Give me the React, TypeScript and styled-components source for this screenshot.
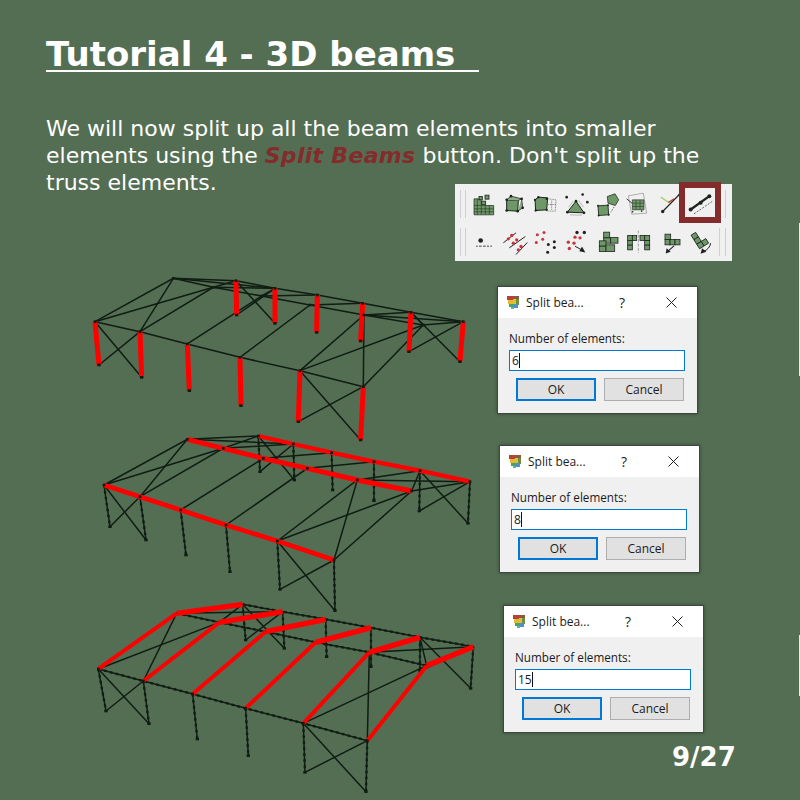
import React from 'react';
import styled, { createGlobalStyle } from 'styled-components';

type Point = [number, number];
type Mode = 'columns' | 'eaves' | 'rafters';

const GlobalStyle = createGlobalStyle`
  html, body {
    margin: 0;
    padding: 0;
    background: #546e53;
  }
`;

const Slide = styled.div`
  width: 800px;
  height: 800px;
  overflow: hidden;
  background: #546e53;
  color: #fff;
  font-family: 'DejaVu Sans', sans-serif;
  display: flex;
  flex-direction: column;
`;

const Title = styled.h1`
  margin: 34px 0 0 46px;
  font-size: 34px;
  line-height: 40px;
  font-weight: 700;
  white-space: pre;
  text-decoration: underline;
  text-decoration-thickness: 2px;
  text-underline-offset: 4px;
`;

const Intro = styled.p`
  margin: 41px 0 0 46px;
  width: 690px;
  font-size: 22px;
  line-height: 27px;
`;

const Accent = styled.em`
  color: #842b2b;
  font-weight: 700;
  letter-spacing: 0.3px;
`;

const Toolbar = styled.div`
  margin: -12px 0 0 455px;
  width: 277px;
  height: 77px;
  background: #f0f0f0;
  display: flex;
  flex-direction: column;
  filter: blur(0.3px);
`;

const ToolRow = styled.div`
  height: 38px;
  padding: 1px 0 0 5px;
  display: flex;
  align-items: center;
`;

const Separator = styled.span<{ $gap?: number }>`
  width: 1px;
  height: 28px;
  margin-left: ${p => p.$gap ?? 0}px;
  background: #cfcfcf;
  flex: none;
`;

const ToolIcon = styled.span<{ $selected?: boolean; $first?: boolean }>`
  position: relative;
  width: 31px;
  height: 34px;
  display: block;
  flex: none;
  margin-left: ${p => (p.$first ? 3 : 0)}px;

  ${p =>
    p.$selected &&
    `
    &::after {
      content: '';
      position: absolute;
      left: -7px;
      top: -5px;
      width: 30px;
      height: 29px;
      border: 6px solid #842b2b;
    }
  `}
`;

const IconArt = styled.svg`
  display: block;
  width: 31px;
  height: 34px;
  overflow: visible;
`;

const Stage = styled.div`
  flex: 1;
  display: flex;
`;

const Drawing = styled.svg`
  display: block;
  width: 490px;
  height: 539px;
  flex: none;
`;

const DialogColumn = styled.div`
  flex: 1;
  display: flex;
  flex-direction: column;
  padding-top: 25px;
`;

const Dialog = styled.div<{ $left: number; $top: number }>`
  width: 201px;
  height: 128px;
  box-sizing: border-box;
  margin: ${p => p.$top}px 0 0 ${p => p.$left}px;
  background: #f0f0f0;
  border: 1px solid #3f463f;
  box-shadow: 0 0 3px rgba(30, 40, 30, 0.55);
  color: #1b1b1b;
  font-family: 'Open Sans', sans-serif;
  font-size: 12px;
`;

const TitleBar = styled.div`
  height: 31px;
  background: #fff;
  display: flex;
  align-items: center;
  padding-left: 8px;
`;

const TitleText = styled.span`
  margin-left: 5px;
  width: 80px;
  white-space: nowrap;
`;

const Help = styled.span`
  width: 20px;
  margin-left: 6px;
  text-align: center;
  font-size: 14px;
`;

const CloseIcon = styled.svg`
  width: 11px;
  height: 11px;
  margin-left: 34px;
`;

const Body = styled.div`
  padding: 11px 11px 0;
`;

const FieldLabel = styled.div`
  height: 18px;
  line-height: 18px;
  font-size: 11.7px;
`;

const Field = styled.div`
  margin-top: 3px;
  width: 176px;
  height: 21px;
  box-sizing: border-box;
  background: #fff;
  border: 1px solid #0078d7;
  padding-left: 2px;
  line-height: 19px;
  display: flex;
  align-items: center;
`;

const Caret = styled.span`
  width: 1px;
  height: 15px;
  background: #111;
`;

const Buttons = styled.div`
  margin: 7px 0 0 7px;
  display: flex;
  gap: 8px;
`;

const Button = styled.div<{ $primary?: boolean }>`
  width: 80px;
  height: 23px;
  box-sizing: border-box;
  background: #e1e1e1;
  border: ${p => (p.$primary ? '2px solid #0078d7' : '1px solid #adadad')};
  display: flex;
  align-items: center;
  justify-content: center;
`;

const PageNumber = styled.div`
  margin: 9px 0 0 182px;
  font-size: 26px;
  line-height: 30px;
  font-weight: 700;
`;

const EdgeMark = styled.span<{ $top: number; $height: number }>`
  position: absolute;
  left: 799px;
  top: ${p => p.$top}px;
  width: 1px;
  height: ${p => p.$height}px;
  background: #e8ece8;
`;

const DARK = '#0f1d13';
const RED = '#ff0000';

interface FrameData {
  x: number;
  y: number;
  mode: Mode;
  front: Point[];
  ridge: Point[];
  back: Point[];
  frontBase: Point[];
  backBase: Point[];
  extra?: Point[][];
}

const frames: FrameData[] = [
  {
    x: 80,
    y: 270,
    mode: 'columns',
    front: [[45, 155], [180, 185], [322, 222], [480, 262], [660, 302], [850, 350]],
    ridge: [[280, 25], [400, 52], [545, 78], [690, 105], [852, 135], [1030, 165]],
    back: [[468, 32], [585, 55], [712, 75], [848, 100], [993, 127], [1150, 155]],
    frontBase: [[57, 285], [185, 322], [328, 362], [483, 407], [655, 455], [842, 510]],
    backBase: [[470, 135], [585, 160], [710, 187], [842, 213], [987, 245], [1140, 275]],
    extra: [[[545, 78], [585, 55]]],
  },
  {
    x: 90,
    y: 430,
    mode: 'eaves',
    front: [[42, 165], [150, 200], [272, 240], [408, 285], [562, 333], [732, 390]],
    ridge: [[292, 28], [400, 55], [520, 85], [652, 115], [802, 150], [965, 183]],
    back: [[505, 18], [610, 42], [725, 68], [852, 95], [990, 122], [1140, 155]],
    frontBase: [[60, 290], [168, 330], [288, 375], [420, 425], [570, 478], [735, 542]],
    backBase: [[510, 125], [613, 150], [728, 180], [852, 212], [988, 243], [1134, 280]],
  },
  {
    x: 90,
    y: 595,
    mode: 'rafters',
    front: [[25, 222], [160, 258], [308, 297], [467, 340], [640, 385], [832, 437]],
    ridge: [[260, 55], [388, 82], [527, 110], [677, 142], [838, 172], [1010, 212]],
    back: [[458, 28], [578, 50], [707, 73], [843, 98], [990, 127], [1150, 155]],
    frontBase: [[48, 348], [177, 386], [322, 432], [475, 482], [645, 532], [828, 590]],
    backBase: [[467, 135], [583, 160], [710, 185], [843, 215], [990, 228], [1142, 280]],
  },
];

const toPath = (pts: Point[]) => 'M' + pts.map(p => p.join(' ')).join('L');

const Member = ({ pts, beads, red }: { pts: Point[]; beads?: boolean; red?: number }) => (
  <>
    <path d={toPath(pts)} fill="none" stroke={red ? RED : DARK} strokeWidth={red ?? 4.5} />
    {beads && !red && <path d={toPath(pts)} fill="none" stroke={DARK} strokeWidth={7} strokeDasharray="8 10" />}
  </>
);

const Frame = ({ data }: { data: FrameData }) => {
  const { front, ridge, back, frontBase, backBase, mode } = data;
  const columnsSplit = mode !== 'columns';
  const eavesSplit = mode === 'rafters';
  const columns = [...front.map((p, i) => [p, frontBase[i]]), ...back.map((p, i) => [p, backBase[i]])] as Point[][];

  return (
    <g transform={`translate(${data.x} ${data.y}) scale(0.3333)`}>
      {/* bracing between the end columns and in the roof */}
      {(
        [
          [front[0], frontBase[1]],
          [front[1], frontBase[0]],
          [front[4], frontBase[5]],
          [front[5], frontBase[4]],
          [back[0], backBase[1]],
          [back[1], backBase[0]],
          [back[4], backBase[5]],
          [back[5], backBase[4]],
          [ridge[0], front[1]],
          [front[0], ridge[1]],
          [ridge[4], front[5]],
          [front[4], ridge[5]],
          [ridge[0], back[1]],
          [ridge[1], back[0]],
          [ridge[4], back[5]],
          [ridge[5], back[4]],
          ...(data.extra ?? []),
        ] as Point[][]
      ).map((pts, i) => (
        <Member key={i} pts={pts} />
      ))}
      {mode !== 'rafters' &&
        front.map((p, i) => <Member key={i} pts={[p, ridge[i], back[i]]} />)}
      {mode !== 'eaves' && (
        <>
          <Member pts={front} beads={eavesSplit} />
          <Member pts={ridge} beads={eavesSplit} />
          <Member pts={back} beads={eavesSplit} />
        </>
      )}
      {columns.map((pts, i) => (
        <React.Fragment key={i}>
          <Member pts={pts} beads={columnsSplit} red={mode === 'columns' ? 15 : undefined} />
          <rect x={pts[1][0] - 5} y={pts[1][1] - 4} width={10} height={8} fill={DARK} />
        </React.Fragment>
      ))}
      {mode === 'eaves' && (
        <>
          <Member pts={front} red={14} />
          <Member pts={ridge} red={15} />
          <Member pts={back} red={13} />
        </>
      )}
      {mode === 'rafters' &&
        front.map((p, i) => (
          <React.Fragment key={i}>
            <Member pts={[p, ridge[i]]} red={12} />
            <Member pts={[ridge[i], back[i]]} red={16} />
          </React.Fragment>
        ))}
      {[...front, ...(mode === 'rafters' ? [] : ridge), ...(mode === 'rafters' ? [] : back)].map((p, i) => (
        <rect key={i} x={p[0] - 4} y={p[1] - 4} width={8} height={8} fill={DARK} />
      ))}
    </g>
  );
};

// toolbar drawings use the coordinates of a 3x crop of the toolbar
const GREEN = '#6f9868';
const INK = '#1c241d';
const PIN = '#c7353a';

const Cells = ({ cells }: { cells: number[][] }) => (
  <>
    {cells.map(([x, y, w, h], i) => (
      <rect key={i} x={x} y={y} width={w} height={h} fill={GREEN} stroke={INK} strokeWidth={2.4} />
    ))}
  </>
);

const Dots = ({ pts, r = 4, c = INK }: { pts: number[][]; r?: number; c?: string }) => (
  <>
    {pts.map(([x, y], i) => (
      <circle key={i} cx={x} cy={y} r={r} fill={c} />
    ))}
  </>
);

const topIcons: React.ReactNode[] = [
  <>
    <path d="M72 55h22v20h37v28H72z" fill={GREEN} stroke={INK} strokeWidth={2} />
    <path d="M72 75h22M72 85h59M72 94h59M82 55v48M94 75v28M106 75v28M118 75v28" stroke={INK} strokeWidth={1.6} />
    <Cells cells={[[87, 48, 10, 10], [105, 44, 12, 12], [95, 62, 12, 10]]} />
  </>,
  <>
    <path d="M170 58L205 60L203 92L170 90z" fill={GREEN} stroke={INK} strokeWidth={3} />
    <path d="M170 58L183 47L215 55L205 60M215 55L218 82L203 92" fill="#8fae88" stroke={INK} strokeWidth={2.4} />
    <Dots pts={[[170, 58], [183, 47], [215, 55], [218, 82], [203, 92], [170, 90]]} />
  </>,
  <>
    <path d="M255 58L265 50L293 52L290 88L257 90z" fill={GREEN} stroke={INK} strokeWidth={3} />
    <path d="M295 55L318 58L316 92L292 92M305 60V90M295 72H318" fill="none" stroke={INK} strokeWidth={1.5} strokeDasharray="3 2" />
    <Dots pts={[[255, 58], [265, 50], [290, 55], [257, 90], [290, 88]]} r={3.5} />
  </>,
  <>
    <path d="M378 62L402 97L352 95z" fill={GREEN} stroke={INK} strokeWidth={3} />
    <path d="M356 80L370 62M386 60L400 80M360 103L396 104" stroke="#9a9a9a" strokeWidth={2} />
    <Dots pts={[[378, 62], [352, 95], [402, 97], [350, 50], [398, 42], [412, 65]]} />
  </>,
  <>
    <path d="M472 48L495 40L506 58L496 75L474 68z" fill={GREEN} stroke={INK} strokeWidth={2.2} />
    <path d="M444 76L474 74L476 103L446 105z" fill={GREEN} stroke={INK} strokeWidth={2.6} />
    <path d="M492 80L482 96" stroke={INK} strokeWidth={2.4} strokeDasharray="3 3" />
    <Dots pts={[[444, 76], [474, 74], [446, 105], [476, 103]]} r={3} />
  </>,
  <>
    <path d="M535 46L580 38L590 98L545 101z" fill="none" stroke="#8b8b8b" strokeWidth={2} />
    <path d="M547 58H582V88H547z" fill={GREEN} stroke={INK} strokeWidth={1.8} />
    <path d="M547 68H582M547 78H582M558 58V88M570 58V88" stroke={INK} strokeWidth={1.4} />
    <path d="M530 55L546 68" stroke={INK} strokeWidth={2.6} />
    <Dots pts={[[548, 94], [575, 92]]} r={2.4} />
  </>,
  <>
    <path d="M638 93L688 42" stroke={INK} strokeWidth={3.4} />
    <path d="M632 50L660 68" stroke="#a5d36e" strokeWidth={4} />
    <path d="M655 66L672 55" stroke={PIN} strokeWidth={4} />
    <Dots pts={[[638, 93]]} r={5} />
    <Dots pts={[[688, 42]]} r={3} />
  </>,
  <>
    <path d="M722 87L778 47" stroke={INK} strokeWidth={7} />
    <Dots pts={[[722, 87], [752, 67], [778, 47]]} r={6} />
    <path d="M732 100L788 62" stroke={INK} strokeWidth={2} strokeDasharray="6 4" />
  </>,
];

const bottomIcons: React.ReactNode[] = [
  <>
    <Dots pts={[[92, 180]]} r={7} />
    <path d="M78 197h5m4 0h8m4 0h8m4 0h6m4 0h5" stroke="#444" strokeWidth={3} />
  </>,
  <>
    <path d="M160 187L198 157M178 202L226 168M198 222L232 186" stroke={INK} strokeWidth={3} />
    <Dots pts={[[175, 175], [185, 165], [190, 188], [200, 178], [205, 208], [213, 198]]} r={5} c={PIN} />
  </>,
  <>
    <Dots pts={[[262, 163], [282, 156], [278, 176], [259, 186]]} r={4.5} c={PIN} />
    <Dots pts={[[313, 184], [295, 192], [313, 201], [293, 215]]} r={4.5} />
  </>,
  <>
    <Dots pts={[[355, 185], [375, 170], [390, 172], [372, 188], [358, 204]]} r={5} c={PIN} />
    <Dots pts={[[381, 156], [403, 156]]} r={5} />
    <path d="M375 197L398 210" stroke={INK} strokeWidth={3} />
    <path d="M406 216L388 212L396 198z" fill={INK} />
  </>,
  <Cells
    cells={[[461, 155, 18, 17], [461, 172, 21, 16], [482, 171, 22, 17], [448, 181, 20, 16], [448, 197, 20, 16], [468, 193, 26, 20]]}
  />,
  <>
    <Cells
      cells={[[533, 165, 14, 15], [547, 165, 13, 15], [533, 180, 14, 14], [533, 194, 14, 14], [570, 165, 14, 15], [584, 165, 15, 15], [584, 180, 15, 14], [584, 194, 15, 14]]}
    />
    <path d="M565 150V217" stroke="#8b8b8b" strokeWidth={2.4} strokeDasharray="9 4" />
  </>,
  <>
    <Cells cells={[[645, 161, 17, 16], [645, 177, 15, 16], [660, 177, 15, 16], [675, 177, 15, 16]]} />
    <path d="M672 196L654 212" stroke={INK} strokeWidth={3.4} />
    <path d="M647 219L650 203L662 214z" fill={INK} />
  </>,
  <>
    <g transform="rotate(-32 745 180)">
      <Cells cells={[[735, 155, 16, 16], [735, 171, 16, 16], [735, 187, 16, 16], [751, 187, 16, 16]]} />
    </g>
    <path d="M782 188C780 200 772 208 762 212" fill="none" stroke={INK} strokeWidth={3} />
    <path d="M752 220L756 203L769 214z" fill={INK} />
  </>,
];

const Icon = ({ children, index, row, selected }: { children: React.ReactNode; index: number; row: number; selected?: boolean }) => (
  <ToolIcon $selected={selected} $first={index === 0}>
    <IconArt viewBox={`${57 + 93 * index} ${row === 0 ? 19.5 : 133.5} 93 102`}>{children}</IconArt>
  </ToolIcon>
);

const AppGlyph = () => (
  <svg width="15" height="15" viewBox="0 0 15 15">
    <rect x="1" y="1" width="6" height="4" fill="#b5413b" />
    <rect x="7" y="1" width="6" height="3" fill="#8a5a3a" />
    <rect x="10" y="4" width="3" height="6" fill="#6f8f3c" />
    <rect x="2" y="5" width="5" height="4" fill="#e5b92d" />
    <rect x="7" y="4" width="3" height="5" fill="#d8c23a" />
    <rect x="3" y="9" width="5" height="3" fill="#4ba45c" />
    <rect x="8" y="9" width="4" height="4" fill="#4f8fcf" />
    <rect x="5" y="12" width="3" height="2" fill="#5fa9c9" />
  </svg>
);

const SplitDialog = ({ value, left, top }: { value: string; left: number; top: number }) => (
  <Dialog $left={left} $top={top}>
    <TitleBar>
      <AppGlyph />
      <TitleText>Split bea...</TitleText>
      <Help>?</Help>
      <CloseIcon viewBox="0 0 11 11">
        <path d="M.5.5l10 10M10.5.5l-10 10" stroke="#222" strokeWidth="1" fill="none" />
      </CloseIcon>
    </TitleBar>
    <Body>
      <FieldLabel>Number of elements:</FieldLabel>
      <Field>
        {value}
        <Caret />
      </Field>
      <Buttons>
        <Button $primary>OK</Button>
        <Button>Cancel</Button>
      </Buttons>
    </Body>
  </Dialog>
);

export default function App() {
  return (
    <Slide>
      <GlobalStyle />
      <Title>{'Tutorial 4 - 3D beams  '}</Title>
      <Intro>
        We will now split up all the beam elements into smaller
        <br />
        elements using the <Accent>Split Beams</Accent> button. Don't split up the
        <br />
        truss elements.
      </Intro>
      <Toolbar>
        <ToolRow>
          <Separator />
          <Separator $gap={4} />
          {topIcons.map((icon, i) => (
            <Icon key={i} index={i} row={0} selected={i === 7}>
              {icon}
            </Icon>
          ))}
          <Separator $gap={8} />
        </ToolRow>
        <ToolRow>
          <Separator />
          <Separator $gap={4} />
          {bottomIcons.map((icon, i) => (
            <Icon key={i} index={i} row={1}>
              {icon}
            </Icon>
          ))}
          <Separator $gap={2} />
          <Separator $gap={5} />
        </ToolRow>
      </Toolbar>
      <Stage>
        <Drawing viewBox="0 261 490 539">
          {frames.map((f, i) => (
            <Frame key={i} data={f} />
          ))}
        </Drawing>
        <DialogColumn>
          <SplitDialog value="6" left={7} top={0} />
          <SplitDialog value="8" left={9} top={31} />
          <SplitDialog value="15" left={13} top={32} />
          <PageNumber>9/27</PageNumber>
        </DialogColumn>
      </Stage>
      <EdgeMark $top={223} $height={153} />
      <EdgeMark $top={635} $height={61} />
    </Slide>
  );
}
